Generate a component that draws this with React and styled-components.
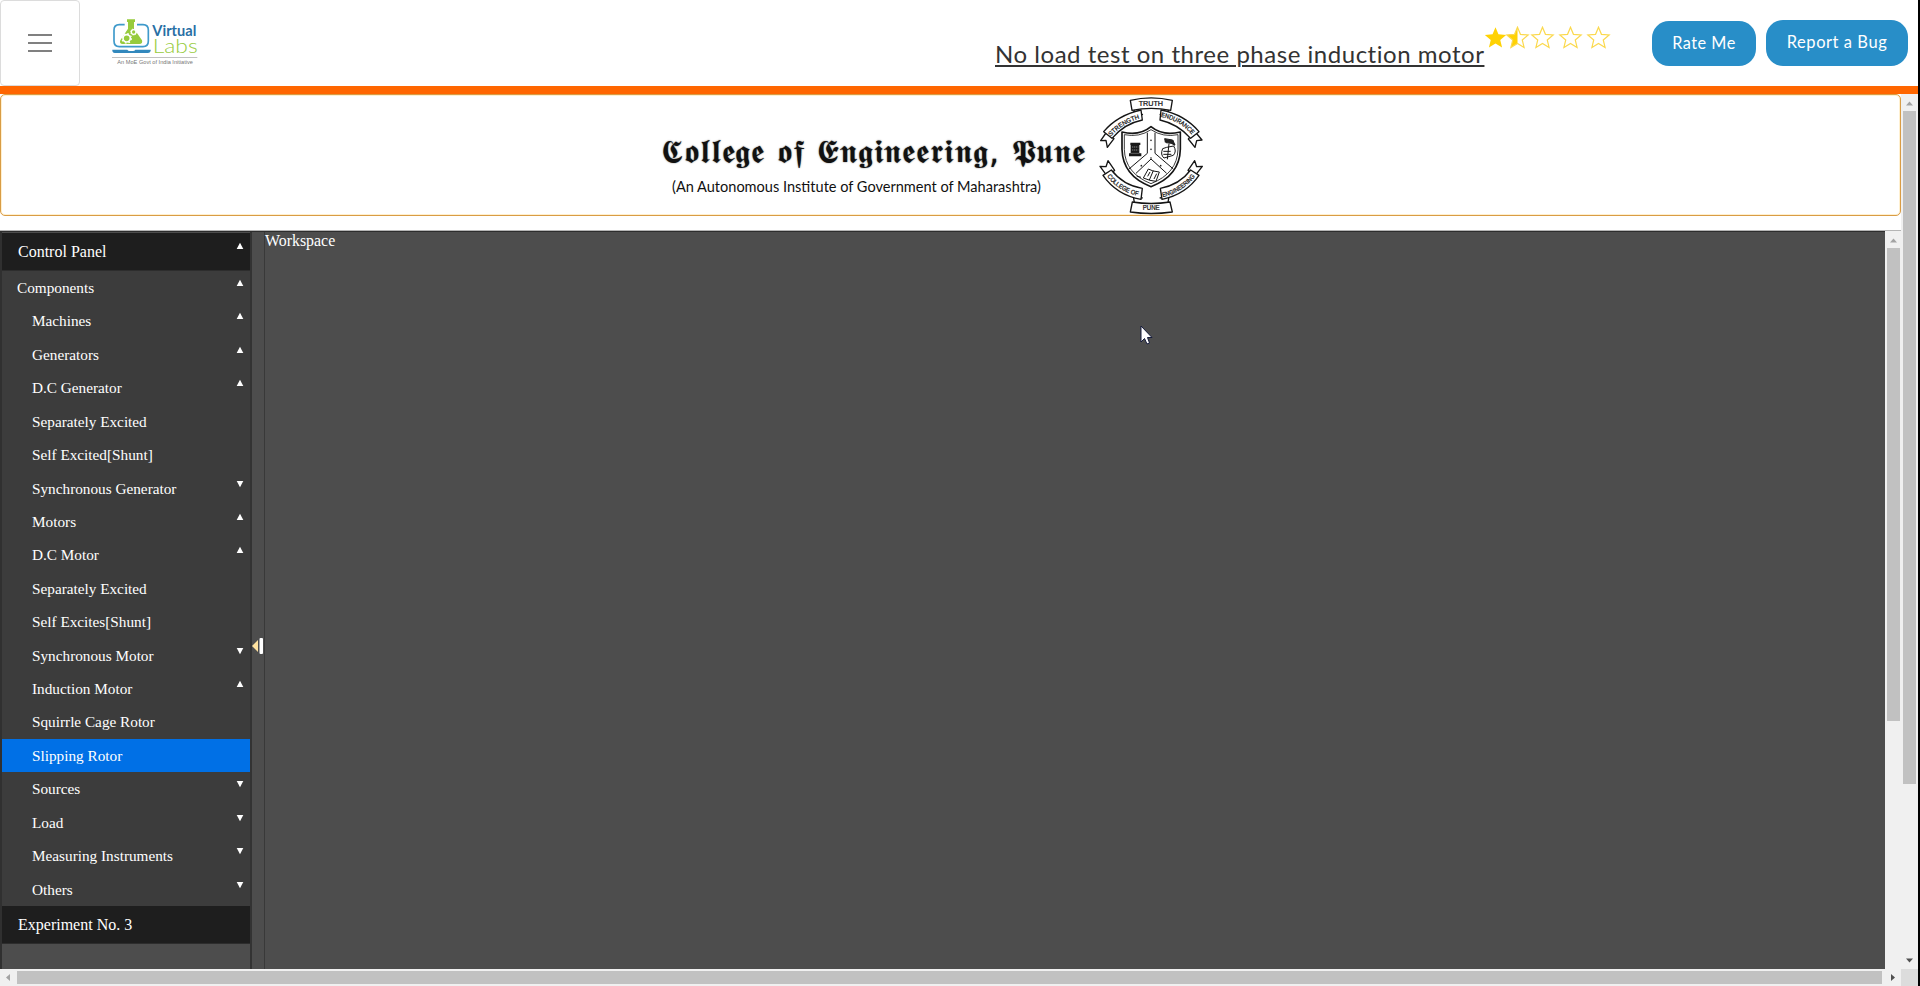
import React from "react";
import styled, { createGlobalStyle, css } from "styled-components";

const Global = createGlobalStyle`
  * { box-sizing: border-box; }
  html, body { margin: 0; padding: 0; overflow: hidden; background: #fff; }
`;

const Page = styled.div`
  width: 1920px;
  height: 986px;
  display: flex;
  flex-direction: column;
  border-right: 2px solid #000;
  background: #fff;
  overflow: hidden;
`;

const Header = styled.header`
  flex: none;
  height: 94px;
  display: flex;
  align-items: flex-start;
  border-bottom: 8px solid #ff6600;
`;

const MenuButton = styled.button`
  width: 80px;
  height: 86px;
  padding: 0;
  display: flex;
  flex-direction: column;
  align-items: center;
  justify-content: center;
  gap: 6px;
  background: #fff;
  border: 1px solid #dcdcdc;
  border-radius: 4px;
`;

const MenuBar = styled.span`
  width: 24px;
  height: 2px;
  background: #808080;
`;

const LogoBox = styled.div`
  margin: 18px 0 0 32px;
  width: 86px;
  height: 48px;
  svg { display: block; }
`;

const Title = styled.h1`
  margin: 37px 0 0 auto;
  width: 489px;
  white-space: nowrap;
  font: 400 24px/34px Lato, sans-serif;
  letter-spacing: ${(p) => p.$spacing}px;
  color: #333;
  text-decoration: underline;
  text-decoration-thickness: 2px;
  text-underline-offset: 2px;
`;

const Stars = styled.svg`
  flex: none;
  margin-top: 26px;
  width: 127px;
  height: 24px;
`;

const Actions = styled.div`
  display: flex;
  align-items: flex-end;
  gap: 10px;
  height: 66px;
  margin: 0 10px 0 41px;
`;

const ActionButton = styled.button`
  width: ${(p) => p.$w}px;
  height: ${(p) => p.$h}px;
  padding: 0 0 2px;
  border: 0;
  border-radius: 17px;
  background: #288ec8;
  color: #fff;
  font: 400 ${(p) => p.$size}px/20px Lato, sans-serif;
  letter-spacing: ${(p) => p.$spacing}px;
  white-space: nowrap;
`;

const Frame = styled.div`
  flex: 1;
  min-height: 0;
  display: grid;
  grid-template-columns: 1901px 17px;
  grid-template-rows: 875px 17px;
`;

const Content = styled.main`
  display: flex;
  flex-direction: column;
  min-width: 0;
  min-height: 0;
`;

const Banner = styled.section`
  flex: none;
  height: 122px;
  margin-bottom: 14px;
  padding-left: 660px;
  display: flex;
  align-items: flex-start;
  border: 1px solid #d99c45;
  box-shadow: inset 0 0 0 1px #fff0cf;
  border-radius: 5px;
`;

const BannerText = styled.div`
  width: 437px;
  padding-top: 33px;
`;

const CollegeName = styled.div`
  height: 48px;
  white-space: nowrap;
  font: 400 33px/48px "DejaVu Sans", serif;
  letter-spacing: ${(p) => p.$spacing}px;
  color: #111;
  text-shadow: 0 0 1.5px #555;
`;

const CollegeNote = styled.div`
  padding-left: 11px;
  white-space: nowrap;
  font: 400 14.56px/22px Lato, sans-serif;
  letter-spacing: ${(p) => p.$spacing}px;
  color: #111;
`;

const Crest = styled.svg`
  width: 106px;
  height: 119px;
  margin-top: 1px;
`;

const Work = styled.section`
  flex: 1;
  min-height: 0;
  display: flex;
  border-top: 1px solid #b5b5b5;
`;

const Bench = styled.div`
  width: 1885px;
  display: flex;
  border-top: 1px solid #2d2d2d;
  background: #4d4d4d;
`;

const serif = css`
  font-family: "Liberation Serif", "Times New Roman", serif;
  color: #fff;
  white-space: nowrap;
`;

const Sidebar = styled.nav`
  width: 252px;
  padding-top: 1px;
  border-left: 2px solid #303030;
  border-right: 2px solid #333;
`;

const Section = styled.div`
  ${serif}
  height: 38px;
  padding: 9px 6px 0 16px;
  display: flex;
  justify-content: space-between;
  background: #1e1e1e;
  border-bottom: 1px solid #2d2d2d;
  font-size: 16px;
  line-height: 20px;
`;

const Tree = styled.div`
  height: 635px;
  display: grid;
  grid-template-rows: repeat(19, 1fr);
  background: #3c3c3c;
`;

const Row = styled.div`
  ${serif}
  padding: 7px 6px 0 ${(p) => (p.$top ? 15 : 30)}px;
  min-height: 0;
  display: flex;
  justify-content: space-between;
  background: ${(p) => (p.$active ? "#0070e6" : "transparent")};
  font-size: 15.25px;
  line-height: 20px;
`;

const Marker = styled.svg`
  flex: none;
  width: 8px;
  height: 8px;
  margin-top: ${(p) => p.$offset}px;
`;

const Splitter = styled.div`
  width: 13px;
  display: flex;
  align-items: flex-start;
  border-right: 1px solid #393939;
  padding-top: 405px;
`;

const Workspace = styled.div`
  ${serif}
  flex: 1;
  font-size: 15.9px;
  line-height: 17px;
`;

const VTrack = styled.div`
  width: ${(p) => p.$w}px;
  display: flex;
  flex-direction: column;
  align-items: center;
  background: #f0f0f0;
`;

const HTrack = styled.div`
  height: 17px;
  display: flex;
  align-items: center;
  background: #f0f0f0;
`;

const ScrollArrow = styled.svg`
  flex: none;
  width: 17px;
  height: 17px;
`;

const VThumb = styled.div`
  width: 13px;
  height: ${(p) => p.$h}px;
  background: #c1c1c1;
`;

const HThumb = styled.div`
  width: 1865px;
  height: 13px;
  background: #c1c1c1;
`;

const Spacer = styled.div`flex: 1;`;

const Corner = styled.div`background: #dcdcdc;`;

const Pointer = styled.svg`
  position: absolute;
  left: 1140px;
  top: 325px;
  width: 13px;
  height: 20px;
`;

const items = [
  ["Components", "up", "top"],
  ["Machines", "up"],
  ["Generators", "up"],
  ["D.C Generator", "up"],
  ["Separately Excited"],
  ["Self Excited[Shunt]"],
  ["Synchronous Generator", "down"],
  ["Motors", "up"],
  ["D.C Motor", "up"],
  ["Separately Excited"],
  ["Self Excites[Shunt]"],
  ["Synchronous Motor", "down"],
  ["Induction Motor", "up"],
  ["Squirrle Cage Rotor"],
  ["Slipping Rotor", null, "active"],
  ["Sources", "down"],
  ["Load", "down"],
  ["Measuring Instruments", "down"],
  ["Others", "down"],
];

const Fold = ({ dir, offset = 1 }) => (
  <Marker $offset={offset} viewBox="0 0 8 8">
    <path d={dir === "up" ? "M4 .7 7.3 7H.7Z" : "M.7 1H7.3L4 7.3Z"} fill="#fff" />
  </Marker>
);

const arrows = {
  up: "M5 11.5 8.5 7.5 12 11.5Z",
  down: "M5 6.5 8.5 10.5 12 6.5Z",
  left: "M10 5 6 8.5 10 12Z",
  right: "M7 5 11 8.5 7 12Z",
};

const Arrow = ({ dir, dim }) => (
  <ScrollArrow viewBox="0 0 17 17">
    <path d={arrows[dir]} fill={dim ? "#a3a3a3" : "#505050"} />
  </ScrollArrow>
);

const starPath = (cx) => {
  const pts = [];
  for (let i = 0; i < 10; i++) {
    const r = i % 2 ? 5 : 11.2;
    const a = (Math.PI / 5) * i - Math.PI / 2;
    pts.push(`${(cx + r * Math.cos(a)).toFixed(2)} ${(12.4 + r * Math.sin(a)).toFixed(2)}`);
  }
  return `M${pts.join("L")}Z`;
};

const Logo = () => (
  <svg width="86" height="48" viewBox="336 54 258 144">
    <path d="M374 74H358Q342 74 342 90V123Q342 140 358 140H429Q445 140 445 123V90Q445 74 429 74H411" fill="none" stroke="#3f9acb" strokeWidth="5" />
    <path d="M337 149H382Q384 153 389 153H399Q404 153 406 149H452V153Q450 159 444 159H344Q338 159 337 153Z" fill="#3288bd" />
    <path d="M381 58H405V66H402V86L426 121Q429 132 418 132H368Q357 132 361 121L384 86V66H381Z" fill="#97cb3d" />
    <circle cx="380" cy="115" r="11" fill="none" stroke="#fff" strokeWidth="5" />
    <circle cx="380" cy="115" r="14" fill="none" stroke="#fff" strokeWidth="4" strokeDasharray="5 6" />
    <circle cx="401" cy="96" r="7" fill="none" stroke="#fff" strokeWidth="4" />
    <circle cx="401" cy="96" r="9" fill="none" stroke="#fff" strokeWidth="3" strokeDasharray="3.5 3.6" />
    <text x="457" y="108" textLength="132" lengthAdjust="spacingAndGlyphs" fontFamily="Lato" fontWeight="700" fontSize="46" fill="#286fa5">Virtual</text>
    <text x="458" y="159" textLength="135" lengthAdjust="spacingAndGlyphs" fontFamily="Lato" fontWeight="300" fontSize="56" fill="#97cb3d">Labs</text>
    <path d="M336 172.500H592" stroke="#b5b5b5" strokeWidth="2.500" />
    <text x="352" y="193" textLength="227" lengthAdjust="spacingAndGlyphs" fontFamily="Liberation Sans" fontSize="16" fill="#777">An MoE Govt of India Initiative</text>
  </svg>
);

const CollegeCrest = () => (
  <Crest viewBox="54 18 318 357">
    <defs>
      <path id="arcStrength" d="M93 140Q126 100 182 85" />
      <path id="arcEndurance" d="M242 80Q301 91 338 138" />
      <path id="arcCollege" d="M81 259Q116 305 180 319" />
      <path id="arcEngineering" d="M248 321Q307 309 349 255" />
    </defs>
    <g fill="#fff" stroke="#151515" strokeWidth="4" strokeLinejoin="round">
      <path d="M163 57 160 79 189 73M264 57 267 79 239 73" />
      <path d="M80 126 62 152 78 151 82 172 102 146 96 140M346 126 366 150 350 152 345 172 325 147 331 140" />
      <path d="M71 125Q112 76 183 60L187 90Q133 101 96 145Z" />
      <path d="M243 60Q314 74 357 125L332 145Q294 102 240 90Z" />
      <path d="M151 31Q213 16 277 31L272 61Q213 49 156 61Z" />
      <path d="M76 251 60 229 78 230 84 212 104 241 94 251M350 251 367 229 350 230 344 212 324 241 334 251" />
      <path d="M163 338 160 319 188 324M264 338 267 319 239 324" />
      <path d="M69 256 94 240Q130 286 187 295L183 328Q110 315 69 256Z" />
      <path d="M357 256 332 240Q299 284 241 295L246 328Q318 313 357 256Z" />
      <path d="M151 366 157 336Q213 345 270 336L277 366Q213 375 151 366Z" />
      <path strokeWidth="5" d="M126 126Q178 139 213 110Q248 139 301 126V178Q299 258 213 290Q128 258 126 178Z" />
      <path strokeWidth="2.500" d="M133 134Q178 143 213 119Q249 143 294 134V178Q292 250 213 281Q135 250 133 178Z" />
      <path strokeWidth="3" d="M202 128V190L147 237M225 128V190L280 237M213 207 168 250M213 207 260 250" fill="none" />
    </g>
    <path d="M151 158H181V165H178V190H184V199H147V190H152V165H151Z" fill="#171717" />
    <path d="M156 171H175M156 180H175M154 190H177" stroke="#bbb" strokeWidth="2" strokeDasharray="4 2" />
    <g fill="none" stroke="#151515" strokeWidth="3">
      <path d="M254 146 278 150 285 165 276 160 258 158ZM267 161 262 208M248 176Q240 194 252 204L280 196Q291 184 281 168L260 172ZM250 184H272M250 193H274" />
      <path d="M205 237Q216 244 238 246L228 274Q211 273 190 264ZM220 242 208 270M210 246 203 259M230 251 222 267" />
      <path d="M183 262 170 258" />
    </g>
    <path d="M254 146 280 151 285 168 272 160 254 157Z" fill="#222" />
    <g fill="#222">
      <circle cx="213" cy="151" r="2.500" /><circle cx="213" cy="178" r="2.500" />
      <circle cx="213" cy="204" r="2.500" /><circle cx="184" cy="227" r="2.500" /><circle cx="242" cy="227" r="2.500" />
    </g>
    <g fontFamily="Liberation Sans" fontSize="21" fill="#111" stroke="#111" strokeWidth=".7">
      <text x="176" y="49" textLength="73" lengthAdjust="spacingAndGlyphs">TRUTH</text>
      <text fontSize="19"><textPath href="#arcStrength" textLength="103" lengthAdjust="spacingAndGlyphs">STRENGTH</textPath></text>
      <text fontSize="19"><textPath href="#arcEndurance" textLength="110" lengthAdjust="spacingAndGlyphs">ENDURANCE</textPath></text>
      <text fontSize="19"><textPath href="#arcCollege" textLength="112" lengthAdjust="spacingAndGlyphs">COLLEGE OF</textPath></text>
      <text fontSize="19"><textPath href="#arcEngineering" textLength="118" lengthAdjust="spacingAndGlyphs">ENGINEERING</textPath></text>
      <text x="188" y="361" textLength="51" lengthAdjust="spacingAndGlyphs">PUNE</text>
    </g>
  </Crest>
);

export default function App() {
  return (
    <Page>
      <Global />
      <Header>
        <MenuButton aria-label="Menu"><MenuBar /><MenuBar /><MenuBar /></MenuButton>
        <LogoBox><Logo /></LogoBox>
        <Title $spacing={0.53}>No load test on three phase induction motor</Title>
        <Stars viewBox="0 0 127 24">
          <defs>
            <clipPath id="half"><rect x="20" y="0" width="13.500" height="24" /></clipPath>
          </defs>
          <path d={starPath(11.5)} fill="#ffd203" />
          <path d={starPath(33.5)} fill="#ffd203" clipPath="url(#half)" />
          {[33.5, 58.5, 86.5, 114.5].map((x) => (
            <path key={x} d={starPath(x)} fill="none" stroke="#fbd94e" strokeWidth="1.2" />
          ))}
        </Stars>
        <Actions>
          <ActionButton $w={104} $h={45} $size={16.3} $spacing={0.5}>Rate Me</ActionButton>
          <ActionButton $w={142} $h={46} $size={16.5} $spacing={0.55}>Report a Bug</ActionButton>
        </Actions>
      </Header>
      <Frame>
        <Content>
          <Banner>
            <BannerText>
              <CollegeName $spacing={0.9}>𝕮𝖔𝖑𝖑𝖊𝖌𝖊 𝖔𝖋 𝕰𝖓𝖌𝖎𝖓𝖊𝖊𝖗𝖎𝖓𝖌, 𝕻𝖚𝖓𝖊</CollegeName>
              <CollegeNote $spacing={0}>(An Autonomous Institute of Government of Maharashtra)</CollegeNote>
            </BannerText>
            <CollegeCrest />
          </Banner>
          <Work>
            <Bench>
              <Sidebar>
                <Section>Control Panel<Fold dir="up" offset={0} /></Section>
                <Tree>
                  {items.map(([label, dir, kind], i) => (
                    <Row key={i} $top={kind === "top"} $active={kind === "active"}>
                      {label}
                      {dir && <Fold dir={dir} />}
                    </Row>
                  ))}
                </Tree>
                <Section>Experiment No. 3</Section>
              </Sidebar>
              <Splitter>
                <svg width="12" height="18" viewBox="0 0 12 18">
                  <path d="M0 9 6 3V15Z" fill="#ffe2a0" />
                  <rect x="7.500" y="1" width="3.500" height="16" rx="1" fill="#fff" />
                </svg>
              </Splitter>
              <Workspace>Workspace</Workspace>
            </Bench>
            <VTrack $w={16}>
              <Arrow dir="up" dim />
              <VThumb $h={473} />
            </VTrack>
          </Work>
        </Content>
        <VTrack $w={17}>
          <Arrow dir="up" dim />
          <VThumb $h={673} />
          <Spacer />
          <Arrow dir="down" />
        </VTrack>
        <HTrack>
          <Arrow dir="left" dim />
          <HThumb />
          <Spacer />
          <Arrow dir="right" />
        </HTrack>
        <Corner />
      </Frame>
      <Pointer viewBox="0 0 13 20">
        <path d="M1 1V17L4.500 13.500 7 19 9.500 18 7.500 12.500H12Z" fill="#fff" stroke="#151b3c" strokeWidth="1" />
      </Pointer>
    </Page>
  );
}
